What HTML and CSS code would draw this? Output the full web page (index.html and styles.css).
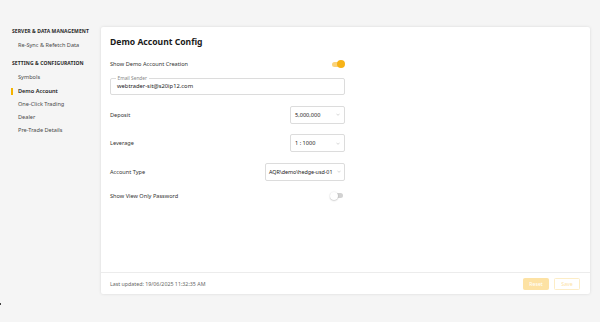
FILE: index.html
```html
<!DOCTYPE html>
<html>
<head>
<meta charset="utf-8">
<link rel="stylesheet" href="styles.css">
</head>
<body>
<div class="page">
  <aside class="sidebar">
    <div class="group-title">SERVER &amp; DATA MANAGEMENT</div>
    <div class="item">Re-Sync &amp; Refetch Data</div>
    <div class="group-title second">SETTING &amp; CONFIGURATION</div>
    <div class="item">Symbols</div>
    <div class="item active">Demo Account</div>
    <div class="item">One-Click Trading</div>
    <div class="item">Dealer</div>
    <div class="item">Pre-Trade Details</div>
  </aside>
  <main class="card">
    <div class="card-body">
      <h1 class="title">Demo Account Config</h1>
      <div class="form">
        <div class="row toggle-row">
          <span class="label">Show Demo Account Creation</span>
          <span class="toggle on"><span class="knob"></span></span>
        </div>
        <div class="field">
          <span class="field-label">Email Sender</span>
          <span class="field-value">webtrader-sit@s20ip12.com</span>
        </div>
        <div class="row select-row">
          <span class="label">Deposit</span>
          <span class="select w55"><span>5,000,000</span><svg class="chev" viewBox="0 0 10 6"><path d="M1 1l4 4 4-4" fill="none" stroke="#999" stroke-width="1"/></svg></span>
        </div>
        <div class="row select-row">
          <span class="label">Leverage</span>
          <span class="select w55"><span>1 : 1000</span><svg class="chev" viewBox="0 0 10 6"><path d="M1 1l4 4 4-4" fill="none" stroke="#999" stroke-width="1"/></svg></span>
        </div>
        <div class="row select-row">
          <span class="label">Account Type</span>
          <span class="select w80"><span>AQR\demo\hedge-usd-01</span><svg class="chev" viewBox="0 0 10 6"><path d="M1 1l4 4 4-4" fill="none" stroke="#999" stroke-width="1"/></svg></span>
        </div>
        <div class="row toggle-row last">
          <span class="label">Show View Only Password</span>
          <span class="toggle off"><span class="knob"></span></span>
        </div>
      </div>
    </div>
    <div class="card-footer">
      <span class="updated">Last updated: 19/06/2025 11:32:35 AM</span>
      <div class="actions">
        <button class="btn reset">Reset</button>
        <button class="btn save">Save</button>
      </div>
    </div>
  </main>
</div>
<span class="dot"></span>
</body>
</html>
```
FILE: styles.css
```css
* { box-sizing: border-box; }
html, body { margin: 0; padding: 0; }
body {
  width: 600px;
  height: 322px;
  background: #f5f5f5;
  font-family: "Noto Sans", "Liberation Sans", sans-serif;
  color: #333;
  position: relative;
  overflow: hidden;
}
.page {
  display: flex;
  align-items: flex-start;
  padding-top: 27px;
}
.sidebar {
  width: 101px;
  flex: none;
  padding-left: 12px;
  margin-top: -0.5px;
}
.group-title {
  font-size: 5px;
  font-weight: 700;
  letter-spacing: 0.08px;
  color: #2a2a2a;
  height: 9px;
  line-height: 9px;
  margin-bottom: 3.5px;
  white-space: nowrap;
}
.group-title.second { margin-top: 7px; margin-bottom: 3px; }
.item {
  font-size: 5.6px;
  color: #4a4a4a;
  height: 13.3px;
  line-height: 13.3px;
  padding-left: 6px;
  position: relative;
  white-space: nowrap;
}
.item.active { font-weight: 600; color: #1a1a1a; }
.item.active::before {
  content: "";
  position: absolute;
  left: -1px;
  top: 3px;
  width: 1.5px;
  height: 7px;
  background: #f5b400;
}
.card {
  width: 489px;
  height: 267px;
  background: #fff;
  border-radius: 2px;
  box-shadow: 0 0 3px rgba(0,0,0,0.12);
  display: flex;
  flex-direction: column;
}
.card-body {
  flex: 1;
  padding: 9px 9px 0 9px;
}
.title {
  margin: 0;
  font-size: 8.6px;
  font-weight: 700;
  color: #1a1a1a;
  line-height: 13px;
}
.form {
  width: 235px;
  margin-top: 11px;
}
.row {
  display: flex;
  align-items: center;
  justify-content: space-between;
}
.label { font-size: 5.6px; color: #333; white-space: nowrap; }
.toggle-row { height: 8px; }
.toggle {
  position: relative;
  width: 12px;
  height: 5px;
  border-radius: 3px;
  margin-right: 1px;
}
.toggle.on { background: #fbd37a; }
.toggle.on .knob {
  position: absolute;
  right: -1px;
  top: -1.5px;
  width: 8px;
  height: 8px;
  border-radius: 50%;
  background: #f7b317;
}
.toggle.off { background: #d2d2d2; width: 12px; margin-right: 2px; }
.toggle.off .knob {
  position: absolute;
  left: -1px;
  top: -1.5px;
  width: 8px;
  height: 8px;
  border-radius: 50%;
  background: #fff;
  box-shadow: 0 0.5px 1.5px rgba(0,0,0,0.3);
}
.field {
  position: relative;
  margin-top: 9.5px;
  height: 17px;
  border: 1px solid #dcdcdc;
  border-radius: 2px;
  display: flex;
  align-items: center;
  padding-left: 6px;
}
.field-label {
  position: absolute;
  top: -4px;
  left: 5px;
  padding: 0 1.5px;
  background: #fff;
  font-size: 4.8px;
  color: #888;
  line-height: 6px;
}
.field-value { font-size: 5.8px; color: #222; }
.select-row { height: 18px; margin-top: 11px; }
.select-row + .select-row { margin-top: 10.5px; }
.select {
  height: 18px;
  border: 1px solid #dcdcdc;
  border-radius: 2px;
  display: flex;
  align-items: center;
  justify-content: space-between;
  padding: 0 4px 0 4px;
  font-size: 5.6px;
  color: #222;
  white-space: nowrap;
}
.w55 { width: 55px; }
.w80 { width: 80px; padding: 0 3px 0 3px; font-size: 5.4px; letter-spacing: -0.05px; }
.chev { width: 4px; height: 3px; flex: none; margin-left: 1px; }
.toggle-row.last { margin-top: 11px; }
.card-footer {
  height: 22px;
  border-top: 1px solid #ececec;
  display: flex;
  align-items: center;
  justify-content: space-between;
  padding: 0 10px 0 9px;
}
.updated { font-size: 5.3px; color: #666; }
.actions { display: flex; gap: 5px; }
.btn {
  width: 26px;
  height: 12px;
  border-radius: 1.5px;
  font-family: inherit;
  font-size: 5.2px;
  padding: 0;
  color: #fff;
}
.btn.reset { background: #fde2a4; border: 1px solid #fde2a4; }
.btn.save { background: #fff; border: 1px solid #fdedc6; color: #fde2a4; }
.dot {
  position: absolute;
  left: 0;
  top: 303px;
  width: 1px;
  height: 2px;
  background: #444;
}
```
